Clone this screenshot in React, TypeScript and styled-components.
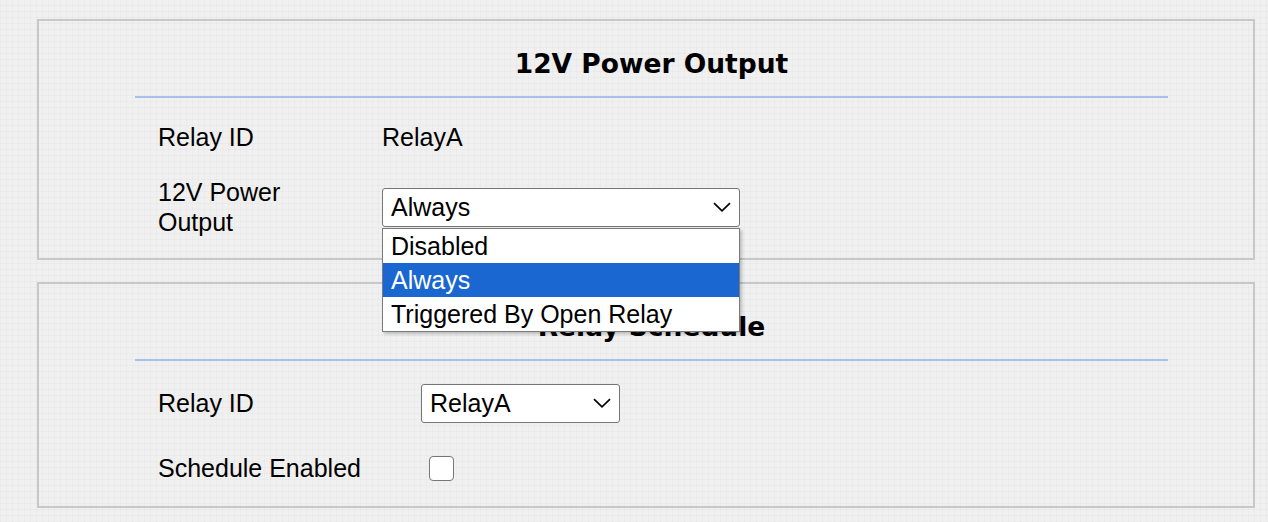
import styled, { createGlobalStyle } from "styled-components";

const GlobalStyle = createGlobalStyle`
  body {
    margin: 0;
    background: #f0f0f0;
    font-family: "Liberation Sans", Arial, sans-serif;
    color: #000;
  }
`;

const Page = styled.div`
  width: 1268px;
  height: 522px;
  overflow: hidden;
  box-sizing: border-box;
  padding: 19px 0 0 37px;
  display: flex;
  flex-direction: column;
  gap: 22px;
  background-color: #f0f0f0;
  background-image:
    repeating-linear-gradient(0deg, rgba(0, 0, 0, 0.018) 0 1px, transparent 1px 6px),
    repeating-linear-gradient(90deg, rgba(0, 0, 0, 0.018) 0 1px, transparent 1px 6px);
`;

const Panel = styled.section`
  width: 1218px;
  box-sizing: border-box;
  border: 2px solid #c8c8c8;
  padding: 27px 85px 0 96px;
`;

const Title = styled.h2`
  margin: 0 0 16px;
  font-family: "DejaVu Sans", Verdana, sans-serif;
  font-weight: bold;
  font-size: 26.5px;
  line-height: 32px;
  text-align: center;
`;

const Divider = styled.div`
  height: 2px;
  background: #a8c1ea;
`;

const Body = styled.div<{ $top: number; $bottom: number; $gap: number }>`
  display: flex;
  flex-direction: column;
  gap: ${p => p.$gap}px;
  padding: ${p => p.$top}px 0 ${p => p.$bottom}px 23px;
`;

const Row = styled.div<{ $h: number }>`
  display: flex;
  align-items: center;
  height: ${p => p.$h}px;
`;

const Label = styled.div<{ $w: number }>`
  width: ${p => p.$w}px;
  flex-shrink: 0;
  font-size: 25px;
  line-height: 30px;
`;

const LabelText = styled.span`
  display: block;
  max-width: 170px;
`;

const Value = styled.div`
  font-size: 25px;
  line-height: 30px;
`;

const SelectBox = styled.div<{ $w: number }>`
  position: relative;
  width: ${p => p.$w}px;
  height: 39px;
  box-sizing: border-box;
  border: 1px solid #767676;
  border-radius: 3px;
  background: #fff;
  display: flex;
  align-items: center;
  justify-content: space-between;
  padding: 0 8px 0 8px;
  font-size: 25px;
  line-height: 30px;
`;

const Chevron = styled.svg`
  width: 18px;
  height: 10px;
  flex-shrink: 0;
`;

const OptionList = styled.ul`
  position: absolute;
  top: calc(100% + 2px);
  left: -1px;
  width: 358px;
  box-sizing: border-box;
  margin: 0;
  padding: 0;
  list-style: none;
  background: #fff;
  border: 1px solid #7a7a7a;
  box-shadow: 2px 2px 3px rgba(0, 0, 0, 0.22);
  z-index: 10;
`;

const Option = styled.li<{ $active?: boolean }>`
  height: 34px;
  line-height: 34px;
  padding-left: 8px;
  font-size: 25px;
  white-space: nowrap;
  background: ${p => (p.$active ? "#1a67d2" : "#fff")};
  color: ${p => (p.$active ? "#fff" : "#000")};
`;

const Checkbox = styled.span`
  display: block;
  width: 25px;
  height: 25px;
  margin-left: 8px;
  box-sizing: border-box;
  border: 1.5px solid #767676;
  border-radius: 4px;
  background: #fff;
`;

function Arrow() {
  return (
    <Chevron viewBox="0 0 18 10">
      <path d="M1 1.2 L9 8.8 L17 1.2" fill="none" stroke="#000" strokeWidth="1.7" />
    </Chevron>
  );
}

const powerOptions = ["Disabled", "Always", "Triggered By Open Relay"];

function App() {
  return (
    <Page>
      <GlobalStyle />
      <Panel>
        <Title>12V Power Output</Title>
        <Divider />
        <Body $top={14} $bottom={16} $gap={10}>
          <Row $h={50}>
            <Label $w={224}>Relay ID</Label>
            <Value>RelayA</Value>
          </Row>
          <Row $h={70}>
            <Label $w={224}>
              <LabelText>12V Power Output</LabelText>
            </Label>
            <SelectBox $w={358}>
              <span>Always</span>
              <Arrow />
              <OptionList>
                {powerOptions.map(o => (
                  <Option key={o} $active={o === "Always"}>
                    {o}
                  </Option>
                ))}
              </OptionList>
            </SelectBox>
          </Row>
        </Body>
      </Panel>
      <Panel>
        <Title>Relay Schedule</Title>
        <Divider />
        <Body $top={17} $bottom={13} $gap={15}>
          <Row $h={50}>
            <Label $w={263}>Relay ID</Label>
            <SelectBox $w={199}>
              <span>RelayA</span>
              <Arrow />
            </SelectBox>
          </Row>
          <Row $h={50}>
            <Label $w={263}>Schedule Enabled</Label>
            <Checkbox />
          </Row>
        </Body>
      </Panel>
    </Page>
  );
}

export default App;
